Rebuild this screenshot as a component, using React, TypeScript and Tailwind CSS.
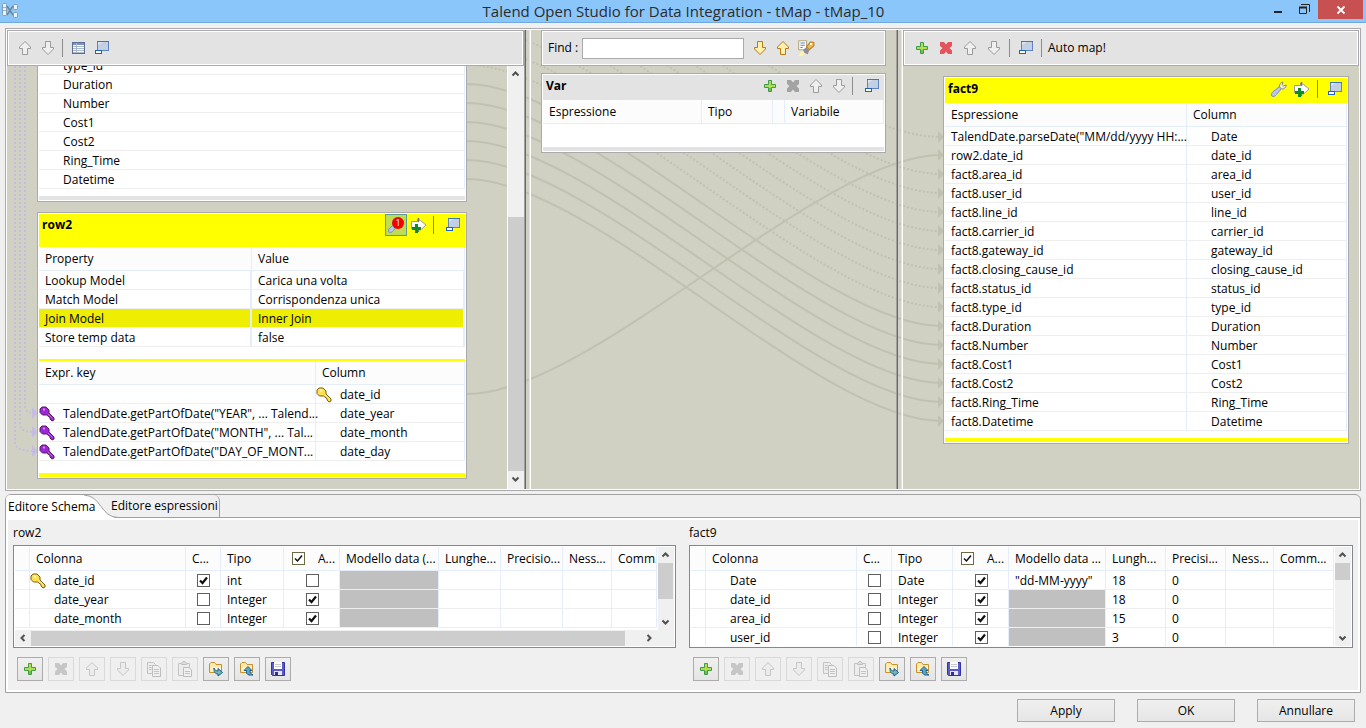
import type { ReactNode } from 'react';
import clsx from 'clsx';

/* ---------- icons ---------- */

function Svg({ children, size = 16 }: { children: ReactNode; size?: number }) {
  return (
    <svg width={size} height={size} viewBox="0 0 16 16" className="block shrink-0" aria-hidden="true">
      {children}
    </svg>
  );
}

interface ArrowProps {
  down?: boolean;
  tone?: 'gray' | 'gold' | 'faint';
}

const arrowTones = {
  gray: { stroke: '#9b9b9b', fill: '#efefef' },
  gold: { stroke: '#b87a14', fill: '#fff0b0' },
  faint: { stroke: '#c6c6c6', fill: '#ececec' },
};

function ArrowIcon({ down = false, tone = 'gray' }: ArrowProps) {
  return (
    <Svg>
      <path
        d={
          down
            ? 'M5.5 1.5H10.5V7.5H13.5V9L8 14.5L2.5 9V7.5H5.5Z'
            : 'M8 1.5L13.5 7V8.5H10.5V14.5H5.5V8.5H2.5V7Z'
        }
        stroke={arrowTones[tone].stroke}
        fill={arrowTones[tone].fill}
      />
    </Svg>
  );
}

function PlusIcon() {
  return (
    <Svg>
      <path d="M6.5 2.5H9.5V6.5H13.5V9.5H9.5V13.5H6.5V9.5H2.5V6.5H6.5Z" fill="#b4dc50" stroke="#3d9b4c" />
      <path d="M7 10H9V13H7Z" fill="#6cc04e" />
    </Svg>
  );
}

function CrossIcon({ color = '#a3a3a3' }: { color?: string }) {
  return (
    <Svg>
      <path
        d="M2 2H6L8 4.5L10 2H14V6L11.500 8L14 10.5V14H10L8 11.500L6 14H2V10.500L4.500 8L2 6Z"
        fill={color}
      />
    </Svg>
  );
}

function MinimizeIcon() {
  return (
    <Svg>
      <rect x="3.5" y="1.5" width="11" height="9" fill="#c3cfe2" stroke="#5f83bd" />
      <path d="M3 1.5H15" stroke="#3f74bf" />
      <path d="M4 10L4 5L9 2H4Z" fill="#dbe4f1" />
      <rect x="1.5" y="10.5" width="6" height="3" fill="#fff" stroke="#1f63c0" />
    </Svg>
  );
}

function TableIcon() {
  return (
    <Svg>
      <rect x="1.5" y="2.5" width="12" height="11" fill="#fff" stroke="#5b6f96" />
      <path d="M2 4H13" stroke="#7f93bb" strokeWidth="2" />
      <path d="M2 6.5H13M2 8.5H13M2 10.5H13M2 12.5H13M5.5 3V13" stroke="#a9b7d1" />
    </Svg>
  );
}

function ArrowPlusIcon() {
  return (
    <Svg>
      <path d="M.5 4.500H6.500V2L9.500 3.500L15 8L9.500 13V11.500H.5Z" fill="#fff" stroke="#9a9a9a" />
      <path d="M7.500 1V5M7.500 11V15" stroke="#777" strokeWidth="1.500" />
      <path d="M4 7H7V10H10V13H7V16H4V13H1V10H4Z" fill="#0b8a2e" />
    </Svg>
  );
}

function WrenchIcon() {
  return (
    <Svg>
      <path
        d="M.8 15C0 14 .5 12 2 10.800L8.500 5.500L10.500 7.500L5.500 13.500C4 15.500 2 16 .8 15Z"
        fill="#b5c6f0"
        stroke="#7d90c0"
      />
      <path d="M8.500 6C8 3.500 9.500 1.500 12 1L11.200 3.500L12.500 4.800L15.300 4C15 6.500 13 8.500 10.500 8Z" fill="#e9e9e6" stroke="#8a8a84" />
    </Svg>
  );
}

function KeyIcon({ purple = false }: { purple?: boolean }) {
  return (
    <Svg>
      <path
        d="M3 1H7L10 4V7L15 12V14L13 15L11 13V11.500L7.500 9H3.500L1 6.500V3Z"
        fill={purple ? '#9c27d6' : '#ffe14d'}
        stroke={purple ? '#5c1763' : '#7a5a10'}
      />
      <path d="M4 3.500H6" stroke={purple ? '#d98bf5' : '#fffbd0'} strokeWidth="2" />
      <path d="M9 8L13.500 12.500" stroke={purple ? '#c46bea' : '#fff27e'} />
    </Svg>
  );
}

function SearchMapIcon() {
  return (
    <Svg size={18}>
      <path d="M1.500 1.500H8.500V9.500H1.500Z" fill="#fff" stroke="#b9a97a" />
      <path d="M3 3.500H7M3 5.500H7M3 7.500H5" stroke="#5a83c9" />
      <path d="M8.500 7L12 2.500L15 3V6L11 9.500Z" fill="#f2b94b" stroke="#b98428" />
      <circle cx="12.500" cy="4.500" r="1" fill="#fff" />
      <path d="M5.500 9.500L8 7.500L11 10L9.500 13.500L6.500 12.500Z" fill="#8c8c94" />
      <path d="M1 15L4.500 10.500L7.500 13L4.500 15Z" fill="#fff4a8" />
    </Svg>
  );
}

function CopyIcon() {
  return (
    <Svg>
      <path d="M1.500 1.500H7.500L9.500 3.500V12.500H1.500Z" fill="#ececec" stroke="#c3c3c3" />
      <path d="M6.500 4.500H12L14.500 7V15.500H6.500Z" fill="#f0f0f0" stroke="#bdbdbd" />
      <path d="M3 4.500H5.500M3 6.500H5.500M3 8.500H5.500M8 8.500H13M8 10.500H13M8 12.500H13" stroke="#c3c3c3" />
    </Svg>
  );
}

function PasteIcon() {
  return (
    <Svg>
      <path d="M1.500 2.500H12.500V14.500H1.500Z" fill="#ececec" stroke="#c3c3c3" />
      <path d="M4.500 3.500V2.500L6 .5H8L9.500 2.500V3.500Z" fill="#ddd" stroke="#bdbdbd" />
      <path d="M6.500 6.500H12L14.500 9V15.500H6.500Z" fill="#f0f0f0" stroke="#bdbdbd" />
      <path d="M8 10.500H13M8 12.500H13" stroke="#c3c3c3" />
    </Svg>
  );
}

function FolderIcon({ up = false }: { up?: boolean }) {
  return (
    <Svg>
      <path d="M1.500 11.500V3L3 1.500H6.500L8 3.500H13.500V11.500Z" fill="#ffe9a6" stroke="#c8912f" />
      <path d="M3 11V6H13V11Z" fill="#fff3c8" />
      {up ? (
        <path d="M9 5.500L13 9.500H11C11 12 12 13 14 14H10C8 13.500 7 12 7.500 9.500H5Z" fill="#5da6bf" stroke="#1f5d8c" />
      ) : (
        <path d="M6 7C6.500 9 8 10 10 10V7.500L14.500 11.500L10 15V13C7.500 13 5.500 11 6 7Z" fill="#6fb7bd" stroke="#1f5d8c" />
      )}
    </Svg>
  );
}

function SaveIcon() {
  return (
    <Svg>
      <path d="M1.500 1.500H14.500V14.500H2.500L1.500 13.500Z" fill="#5a5ac8" stroke="#3333a0" />
      <rect x="4" y="1" width="8" height="7" fill="#fff" />
      <path d="M5 3.500H11M5 5.500H11" stroke="#c9c9d4" />
      <rect x="4" y="10" width="8" height="4" fill="#e6e6f2" />
      <rect x="5" y="11" width="3" height="4" fill="#30308f" />
    </Svg>
  );
}

function Chevron({ dir }: { dir: 'up' | 'down' | 'left' | 'right' }) {
  const paths = {
    up: 'M4.500 9.500L7.500 6.500L10.500 9.500',
    down: 'M4.500 6.500L7.500 9.500L10.500 6.500',
    left: 'M9.500 5L6.500 8L9.500 11',
    right: 'M6.500 5L9.500 8L6.500 11',
  };
  return (
    <Svg>
      <path d={paths[dir]} fill="none" stroke="#505050" strokeWidth="2" />
    </Svg>
  );
}

/* ---------- shared pieces ---------- */

function IconButton({ label, wide = false, children }: { label: string; wide?: boolean; children: ReactNode }) {
  return (
    <button
      type="button"
      aria-label={label}
      className={clsx('flex h-[22px] shrink-0 items-center justify-center', wide ? 'w-6' : 'w-[23px]')}
    >
      {children}
    </button>
  );
}

function Separator({ className = 'mx-1 bg-[#8c8c8c]' }: { className?: string }) {
  return <span className={clsx('h-[18px] w-px shrink-0', className)} />;
}

function Toolbar({ children, className }: { children: ReactNode; className?: string }) {
  return (
    <div className={clsx('relative z-10 h-9 shrink-0 border border-[#a9a9ae] bg-white p-px', className)}>
      <div className="flex h-full items-center bg-[#e3e3e3]">{children}</div>
    </div>
  );
}

function Panel({ children, className }: { children: ReactNode; className?: string }) {
  return <section className={clsx('relative border border-[#a9a9ae] bg-white p-px', className)}>{children}</section>;
}

function Th({ children, className }: { children?: ReactNode; className?: string }) {
  return (
    <th
      className={clsx(
        'h-6 overflow-hidden whitespace-nowrap border-b border-r border-[#e4eefb] bg-[#fcfcfc] p-0 pl-1.5 text-left font-normal',
        className,
      )}
    >
      {children}
    </th>
  );
}

function Td({ children, className }: { children?: ReactNode; className?: string }) {
  return (
    <td
      className={clsx(
        'h-[19px] whitespace-nowrap border-b border-r border-b-[#eeeeee] border-r-[#e4eefb] p-0 pt-px leading-[17px]',
        className,
      )}
    >
      {children}
    </td>
  );
}

function Check({ label, checked, header = false }: { label: string; checked: boolean; header?: boolean }) {
  return (
    <label className="inline-grid align-middle">
      <input
        type="checkbox"
        aria-label={label}
        defaultChecked={checked}
        className={clsx(
          'peer col-start-1 row-start-1 size-[13px] appearance-none border bg-white',
          header ? 'border-[#6b6b45]' : 'border-[#606060]',
        )}
      />
      <svg
        width="13"
        height="13"
        viewBox="0 0 13 13"
        className="pointer-events-none col-start-1 row-start-1 hidden peer-checked:block"
        aria-hidden="true"
      >
        <path d="M3 6.500L5.500 9L10 3.500" fill="none" stroke="#111" strokeWidth={header ? 1.5 : 2.2} />
      </svg>
    </label>
  );
}

/* ---------- mapper canvas ---------- */

const tableClass = 'w-full table-fixed border-separate border-spacing-0';

const sourceColumns = ['type_id', 'Duration', 'Number', 'Cost1', 'Cost2', 'Ring_Time', 'Datetime'];

const lookupProperties = [
  ['Lookup Model', 'Carica una volta'],
  ['Match Model', 'Corrispondenza unica'],
  ['Join Model', 'Inner Join'],
  ['Store temp data', 'false'],
];

const lookupKeys = [
  ['', 'date_id'],
  ['TalendDate.getPartOfDate("YEAR", ... Talend...', 'date_year'],
  ['TalendDate.getPartOfDate("MONTH", ... Tal...', 'date_month'],
  ['TalendDate.getPartOfDate("DAY_OF_MONT...', 'date_day'],
];

const outputRows = [
  ['TalendDate.parseDate("MM/dd/yyyy HH:...', 'Date'],
  ['row2.date_id', 'date_id'],
  ['fact8.area_id', 'area_id'],
  ['fact8.user_id', 'user_id'],
  ['fact8.line_id', 'line_id'],
  ['fact8.carrier_id', 'carrier_id'],
  ['fact8.gateway_id', 'gateway_id'],
  ['fact8.closing_cause_id', 'closing_cause_id'],
  ['fact8.status_id', 'status_id'],
  ['fact8.type_id', 'type_id'],
  ['fact8.Duration', 'Duration'],
  ['fact8.Number', 'Number'],
  ['fact8.Cost1', 'Cost1'],
  ['fact8.Cost2', 'Cost2'],
  ['fact8.Ring_Time', 'Ring_Time'],
  ['fact8.Datetime', 'Datetime'],
];

// Source and target y of each mapping, dotted while the source row is scrolled out
const links = [
  { from: -116, to: 107, dotted: true },
  { from: 364, to: 125, dotted: false },
  ...Array.from({ length: 8 }, (_, i) => ({ from: -98 + i * 19, to: 144 + i * 19, dotted: true })),
  ...Array.from({ length: 6 }, (_, i) => ({ from: 54 + i * 19, to: 296 + i * 19, dotted: false })),
];

function Links() {
  return (
    <svg
      className="absolute inset-0 h-full w-full"
      viewBox="0 0 1352 459"
      preserveAspectRatio="none"
      aria-hidden="true"
    >
      {links.map((link) => (
        <g key={link.to}>
          <path
            d={`M460 ${link.from}C585 ${link.from} 811 ${link.to} 934 ${link.to}`}
            fill="none"
            stroke="#c1c1b1"
            strokeWidth="2"
            strokeDasharray={link.dotted ? '2 2' : undefined}
          />
          <path d={`M931 ${link.to - 6}L937 ${link.to}L931 ${link.to + 6}Z`} fill="#c1c1b1" />
        </g>
      ))}
      {[0, 1, 2].map((i) => (
        <g key={i}>
          <path
            d={`M${18 - i * 5} 36V${374 + i * 19}Q${18 - i * 5} ${383 + i * 19} 26 ${383 + i * 19}`}
            fill="none"
            stroke="#c6bce0"
            strokeWidth="2"
            strokeDasharray="2 2"
          />
          <path d={`M25 ${377 + i * 19}L31 ${383 + i * 19}L25 ${389 + i * 19}Z`} fill="#c6bce0" />
        </g>
      ))}
    </svg>
  );
}

function Sash() {
  return (
    <div className="relative flex w-[7px] shrink-0">
      <span className="w-px bg-[#a0a0a0]" />
      <span className="w-px bg-[#696969]" />
      <span className="ml-[3px] w-px bg-[#e3e3e3]" />
      <span className="w-px bg-white" />
    </div>
  );
}

function InputPane() {
  return (
    <div className="flex min-w-0 flex-col">
      <Toolbar>
        <span className="w-1" />
        <IconButton label="Up">
          <ArrowIcon />
        </IconButton>
        <IconButton label="Down">
          <ArrowIcon down />
        </IconButton>
        <Separator className="ml-[3px] mr-1 bg-[#8c8c8c]" />
        <IconButton label="Table view">
          <TableIcon />
        </IconButton>
        <IconButton label="Minimize">
          <MinimizeIcon />
        </IconButton>
      </Toolbar>
      <div className="flex flex-1 overflow-hidden">
        <div className="min-w-0 flex-1 pb-2.5 pl-[30px] pr-10">
          <Panel className="-mt-[11px] border-t-0">
            <table aria-label="fact8" className={tableClass}>
              <tbody>
                {sourceColumns.map((name) => (
                  <tr key={name}>
                    <Td className="pl-6">{name}</Td>
                  </tr>
                ))}
              </tbody>
            </table>
            <div className="mt-[7px] h-1 bg-[#e3e3e3]" />
          </Panel>

          <Panel className="mt-2.5">
            <header className="flex h-[33px] items-start bg-[#ffff00] pr-px">
              <h2 className="flex-1 pl-[3px] font-bold leading-[22px]">row2</h2>
              <button
                type="button"
                aria-label="tMap settings"
                className="relative flex size-[22px] items-center justify-center border border-[#5f9a8f] bg-[#bfdc55]"
              >
                <WrenchIcon />
                <span className="absolute right-0.5 top-0.5 flex size-3 items-center justify-center rounded-full bg-[#f40000] text-[9px] leading-3 text-white">
                  1
                </span>
              </button>
              <IconButton label="Add output">
                <ArrowPlusIcon />
              </IconButton>
              <Separator className="ml-[3px] mr-[7px] mt-0.5 bg-[#8a8a20]" />
              <IconButton label="Minimize row2">
                <MinimizeIcon />
              </IconButton>
            </header>
            <table className={tableClass}>
              <thead>
                <tr>
                  <Th className="w-1/2">Property</Th>
                  <Th>Value</Th>
                </tr>
              </thead>
              <tbody>
                {lookupProperties.map(([property, value]) => (
                  <tr key={property} className={clsx(property === 'Join Model' && 'bg-[#eeee00]')}>
                    <Td className="border-r-2 pl-1.5">{property}</Td>
                    <Td className="border-r-2 pl-1.5">{value}</Td>
                  </tr>
                ))}
              </tbody>
            </table>
            <div className="mt-3 h-0.5 bg-[#ffff00]" />
            <table className={tableClass}>
              <thead>
                <tr>
                  <Th className="w-[65%]">Expr. key</Th>
                  <Th>Column</Th>
                </tr>
              </thead>
              <tbody>
                {lookupKeys.map(([expression, column]) => (
                  <tr key={column}>
                    <Td>
                      <span className="flex h-[17px] items-center gap-2">
                        {expression && <KeyIcon purple />}
                        {expression}
                      </span>
                    </Td>
                    <Td>
                      <span className={clsx('flex h-[17px] items-center gap-2', expression && 'pl-6')}>
                        {!expression && <KeyIcon />}
                        {column}
                      </span>
                    </Td>
                  </tr>
                ))}
              </tbody>
            </table>
            <div className="mt-3 h-1 bg-[#ffff00]" />
          </Panel>
        </div>
        <div className="relative flex w-[17px] flex-col border-l border-white bg-[#f0f0f0]">
          <Chevron dir="up" />
          <div className="flex-1" />
          <div className="h-[60%] bg-[#cdcdcd]" />
          <Chevron dir="down" />
          <div className="h-0.5" />
        </div>
      </div>
    </div>
  );
}

function VarPane() {
  return (
    <div className="min-w-0 px-2.5">
      <Toolbar>
        <label htmlFor="find" className="w-[39px] shrink-0 whitespace-nowrap pl-[5px]">
          Find :
        </label>
        <input id="find" type="text" className="h-[21px] w-[162px] border border-[#ababab] bg-white px-1 outline-none" />
        <span className="w-1" />
        <IconButton label="Find next">
          <ArrowIcon down tone="gold" />
        </IconButton>
        <IconButton label="Find previous">
          <ArrowIcon tone="gold" />
        </IconButton>
        <IconButton label="Highlight all">
          <SearchMapIcon />
        </IconButton>
      </Toolbar>
      <Panel className="mt-[7px]">
        <header className="flex h-[25px] items-center bg-[#e3e3e3] pb-[3px] pr-px">
          <h2 className="flex-1 pl-[3px] font-bold">Var</h2>
          <IconButton label="Add variable">
            <PlusIcon />
          </IconButton>
          <IconButton label="Remove variable">
            <CrossIcon />
          </IconButton>
          <IconButton label="Move variable up">
            <ArrowIcon />
          </IconButton>
          <IconButton label="Move variable down">
            <ArrowIcon down />
          </IconButton>
          <Separator className="ml-0.5 mr-[7px] bg-[#8c8c8c]" />
          <IconButton label="Minimize Var">
            <MinimizeIcon />
          </IconButton>
        </header>
        <table className={tableClass}>
          <thead>
            <tr>
              <Th>Espressione</Th>
              <Th className="w-[71px]">Tipo</Th>
              <Th className="w-3" />
              <Th className="w-[99px]">Variabile</Th>
            </tr>
          </thead>
        </table>
        <div className="mt-[23px] h-1 bg-[#e3e3e3]" />
      </Panel>
    </div>
  );
}

function OutputPane() {
  return (
    <div className="min-w-0">
      <Toolbar>
        <span className="w-[5px]" />
        <IconButton wide label="Add output table">
          <PlusIcon />
        </IconButton>
        <IconButton wide label="Remove output table">
          <CrossIcon color="#e4545c" />
        </IconButton>
        <IconButton wide label="Move output up">
          <ArrowIcon />
        </IconButton>
        <IconButton wide label="Move output down">
          <ArrowIcon down />
        </IconButton>
        <Separator className="ml-[3px] mr-1 bg-[#8c8c8c]" />
        <IconButton wide label="Minimize outputs">
          <MinimizeIcon />
        </IconButton>
        <Separator className="mx-[3px] bg-[#8c8c8c]" />
        <button type="button" className="pl-[3px]">
          Auto map!
        </button>
      </Toolbar>
      <div className="pl-10 pr-2.5 pt-2.5">
        <Panel>
          <header className="flex h-[25px] items-center bg-[#ffff00] pb-[3px] pr-px">
            <h2 className="flex-1 pl-[3px] font-bold">fact9</h2>
            <IconButton label="Output settings">
              <WrenchIcon />
            </IconButton>
            <IconButton label="Add filter">
              <ArrowPlusIcon />
            </IconButton>
            <Separator className="ml-1 mr-[5px] bg-[#8a8a20]" />
            <IconButton label="Minimize fact9">
              <MinimizeIcon />
            </IconButton>
          </header>
          <table className={tableClass}>
            <thead>
              <tr>
                <Th className="w-[242px]">Espressione</Th>
                <Th>Column</Th>
              </tr>
            </thead>
            <tbody>
              {outputRows.map(([expression, column]) => (
                <tr key={column}>
                  <Td className="pl-1.5">{expression}</Td>
                  <Td className="pl-6">{column}</Td>
                </tr>
              ))}
            </tbody>
          </table>
          <div className="mt-[7px] h-1 bg-[#ffff00]" />
        </Panel>
      </div>
    </div>
  );
}

/* ---------- schema editor ---------- */

interface SchemaRow {
  name: string;
  isKey: boolean;
  type: string;
  nullable: boolean;
  pattern?: string;
  length?: string;
  precision?: string;
}

const row2Schema: SchemaRow[] = [
  { name: 'date_id', isKey: true, type: 'int', nullable: false },
  { name: 'date_year', isKey: false, type: 'Integer', nullable: true },
  { name: 'date_month', isKey: false, type: 'Integer', nullable: true },
];

const fact9Schema: SchemaRow[] = [
  { name: 'Date', isKey: false, type: 'Date', nullable: true, pattern: '"dd-MM-yyyy"', length: '18', precision: '0' },
  { name: 'date_id', isKey: false, type: 'Integer', nullable: true, length: '18', precision: '0' },
  { name: 'area_id', isKey: false, type: 'Integer', nullable: true, length: '15', precision: '0' },
  { name: 'user_id', isKey: false, type: 'Integer', nullable: true, length: '3', precision: '0' },
];

interface SchemaEditorProps {
  title: string;
  headings: string[];
  widths: number[];
  rows: SchemaRow[];
  horizontalScroll?: boolean;
}

function SchemaEditor({ title, headings, widths, rows, horizontalScroll = false }: SchemaEditorProps) {
  const [pattern, length, precision, fallback, comment] = headings;

  return (
    <section className="min-w-0">
      <h3 className="h-[25px] leading-[25px]">{title}</h3>
      <div className="flex h-[103px] flex-col border border-[#828790] bg-white p-px">
        <div className="flex min-h-0 flex-1">
          <div className="min-w-0 flex-1 overflow-hidden">
            <table aria-label={title} className={tableClass}>
              <colgroup>
                {widths.map((width, i) => (
                  <col key={i} style={{ width }} />
                ))}
                <col />
              </colgroup>
              <thead>
                <tr>
                  <Th />
                  <Th>Colonna</Th>
                  <Th>C...</Th>
                  <Th>Tipo</Th>
                  <Th>
                    <span className="flex items-center gap-[13px] pl-0.5">
                      <Check header checked label="Annullabile" />
                      A...
                    </span>
                  </Th>
                  <Th>{pattern}</Th>
                  <Th>{length}</Th>
                  <Th>{precision}</Th>
                  <Th>{fallback}</Th>
                  <Th>{comment}</Th>
                </tr>
              </thead>
              <tbody>
                {rows.map((row) => (
                  <tr key={row.name}>
                    <Td />
                    <Td>
                      <span className={clsx('flex h-[17px] items-center gap-2', !row.isKey && 'pl-6')}>
                        {row.isKey && <KeyIcon />}
                        {row.name}
                      </span>
                    </Td>
                    <Td>
                      <span className="flex justify-center">
                        <Check checked={row.isKey} label={`${row.name} chiave`} />
                      </span>
                    </Td>
                    <Td className="pl-1.5">{row.type}</Td>
                    <Td>
                      <span className="flex justify-center pl-0.5">
                        <Check checked={row.nullable} label={`${row.name} annullabile`} />
                      </span>
                    </Td>
                    <Td className={clsx('pl-1.5', !row.pattern && 'bg-[#c0c0c0]')}>{row.pattern}</Td>
                    <Td className="pl-1.5">{row.length}</Td>
                    <Td className="pl-1.5">{row.precision}</Td>
                    <Td />
                    <Td />
                  </tr>
                ))}
              </tbody>
            </table>
          </div>
          <div className="flex w-[17px] shrink-0 flex-col border-l border-white bg-[#f0f0f0]">
            <Chevron dir="up" />
            <div className={clsx('w-[15px] bg-[#cdcdcd]', horizontalScroll ? 'h-9' : 'h-[17px]')} />
            <div className="flex-1" />
            <Chevron dir="down" />
          </div>
        </div>
        {horizontalScroll && (
          <div className="flex h-4 shrink-0 items-center bg-[#f0f0f0]">
            <Chevron dir="left" />
            <div className="h-[15px] flex-1 bg-[#cdcdcd]" />
            <span className="w-4" />
            <Chevron dir="right" />
            <span className="w-[17px]" />
          </div>
        )}
      </div>
      <div className="flex gap-[5px] pl-1 pt-[9px]">
        <EditorButton label="Aggiungi">
          <PlusIcon />
        </EditorButton>
        <EditorButton disabled label="Elimina">
          <CrossIcon color="#c6c6c6" />
        </EditorButton>
        <EditorButton disabled label="Su">
          <ArrowIcon tone="faint" />
        </EditorButton>
        <EditorButton disabled label="Giù">
          <ArrowIcon down tone="faint" />
        </EditorButton>
        <EditorButton disabled label="Copia">
          <CopyIcon />
        </EditorButton>
        <EditorButton disabled label="Incolla">
          <PasteIcon />
        </EditorButton>
        <EditorButton label="Importa">
          <FolderIcon />
        </EditorButton>
        <EditorButton label="Esporta">
          <FolderIcon up />
        </EditorButton>
        <EditorButton label="Salva">
          <SaveIcon />
        </EditorButton>
      </div>
    </section>
  );
}

function EditorButton({ label, disabled = false, children }: { label: string; disabled?: boolean; children: ReactNode }) {
  return (
    <button
      type="button"
      aria-label={label}
      disabled={disabled}
      className={clsx(
        'flex h-6 w-[26px] items-center justify-center border',
        disabled ? 'border-[#d9d9d9] bg-[#efefef]' : 'border-[#acacac] bg-linear-to-b from-[#f0f0f0] to-[#e5e5e5]',
      )}
    >
      {children}
    </button>
  );
}

function DialogButton({ children }: { children: ReactNode }) {
  return (
    <button
      type="button"
      className="h-[23px] w-[98px] border border-[#acacac] bg-linear-to-b from-[#f0f0f0] to-[#e5e5e5] leading-[21px]"
    >
      {children}
    </button>
  );
}

/* ---------- window ---------- */

export default function App() {
  return (
    <div className="flex min-h-screen flex-col bg-[#f0f0f0] font-['Open_Sans',sans-serif] text-[12px] leading-4 text-black">
      <header className="relative flex h-[23px] shrink-0 items-start border-b border-[#6fa9dd] bg-[#8bc6fb]">
        <svg width="20" height="20" viewBox="0 0 20 20" className="block" aria-hidden="true">
          <path d="M7 6L13 15M7 15L13 6" stroke="#6f8598" strokeWidth="1.500" />
          <rect x="2.500" y="3.500" width="4" height="12" rx="1" fill="#e9f3fc" stroke="#7d9db8" />
          <rect x="13.500" y="4.500" width="4" height="5" rx="1" fill="#e9f3fc" stroke="#7d9db8" />
          <rect x="13.500" y="12.500" width="4" height="5" rx="1" fill="#e9f3fc" stroke="#7d9db8" />
          <path d="M3 7.500H6M3 10.500H6" stroke="#9db6cb" />
        </svg>
        <h1 className="flex-1 pl-[82px] text-center text-[15px] leading-[23px] text-[#2b2b2b]">
          Talend Open Studio for Data Integration - tMap - tMap_10
        </h1>
        <div className="flex h-[19px] pr-[3px]">
          <button type="button" aria-label="Minimize window" className="flex w-[26px] items-center justify-center">
            <svg width="10" height="10" viewBox="0 0 10 10">
              <path d="M1 7H9" stroke="#222" strokeWidth="2" />
            </svg>
          </button>
          <button type="button" aria-label="Restore window" className="flex w-[27px] items-center justify-center">
            <svg width="11" height="11" viewBox="0 0 11 11">
              <path d="M2 .5H10.500V8" fill="none" stroke="#222" />
              <path d="M.5 3.500H7.500V9.500H.5Z" fill="none" stroke="#222" />
              <path d="M0 3.500H8" stroke="#222" strokeWidth="2" />
            </svg>
          </button>
          <button type="button" aria-label="Close window" className="flex w-[45px] items-center justify-center bg-[#c75050]">
            <svg width="10" height="10" viewBox="0 0 10 10">
              <path d="M1.500 1.500L8.500 8.500M8.500 1.500L1.500 8.500" stroke="#fff" strokeWidth="1.800" />
            </svg>
          </button>
        </div>
      </header>

      <main className="flex flex-1 flex-col px-[5px] pt-[5px]">
        <div className="flex flex-1 border border-[#a9a9ae] bg-white p-px">
          <div className="relative grid flex-1 grid-cols-[517fr_7px_365fr_7px_456fr] overflow-hidden bg-[#d1d1c3]">
            <Links />
            <InputPane />
            <Sash />
            <VarPane />
            <Sash />
            <OutputPane />
          </div>
        </div>

        <div className="mt-[3px] rounded-t-md border border-[#a0a0a0]">
          <div className="flex h-[23px] border-b border-[#a0a0a0]" role="tablist">
            <button type="button" role="tab" aria-selected="true" className="relative z-10 h-[23px] w-28 shrink-0 text-left">
              <svg width="112" height="23" viewBox="0 0 112 23" className="absolute inset-0" aria-hidden="true">
                <path d="M0 23V5Q0 0 5 0H78C96 1 94 22 112 23Z" fill="#fff" />
                <path d="M78 0C96 1 94 22 112 22.500" fill="none" stroke="#a0a0a0" />
              </svg>
              <span className="relative whitespace-nowrap pl-0.5">Editore Schema</span>
            </button>
            <button
              type="button"
              role="tab"
              aria-selected="false"
              className="-ml-3 w-[114px] shrink-0 whitespace-nowrap rounded-tr-md border-r border-[#a0a0a0] pl-[5px] text-left"
            >
              Editore espressioni
            </button>
          </div>
          <div className="border-2 border-white">
            <div className="grid grid-cols-[663fr_664fr] gap-[13px] pb-[9px] pl-[5px] pr-[5px]">
              <SchemaEditor
                title="row2"
                headings={['Modello data (...', 'Lunghe...', 'Precisio...', 'Ness...', 'Comm...']}
                widths={[15, 156, 35, 63, 56, 99, 62, 62, 49]}
                rows={row2Schema}
                horizontalScroll
              />
              <SchemaEditor
                title="fact9"
                headings={['Modello data ...', 'Lungh...', 'Precisi...', 'Ness...', 'Comm...']}
                widths={[15, 151, 35, 61, 56, 97, 60, 60, 48]}
                rows={fact9Schema}
              />
            </div>
          </div>
        </div>
      </main>

      <footer className="flex justify-end gap-[22px] px-[11px] pb-1.5 pt-1.5">
        <DialogButton>Apply</DialogButton>
        <DialogButton>OK</DialogButton>
        <DialogButton>Annullare</DialogButton>
      </footer>
    </div>
  );
}
